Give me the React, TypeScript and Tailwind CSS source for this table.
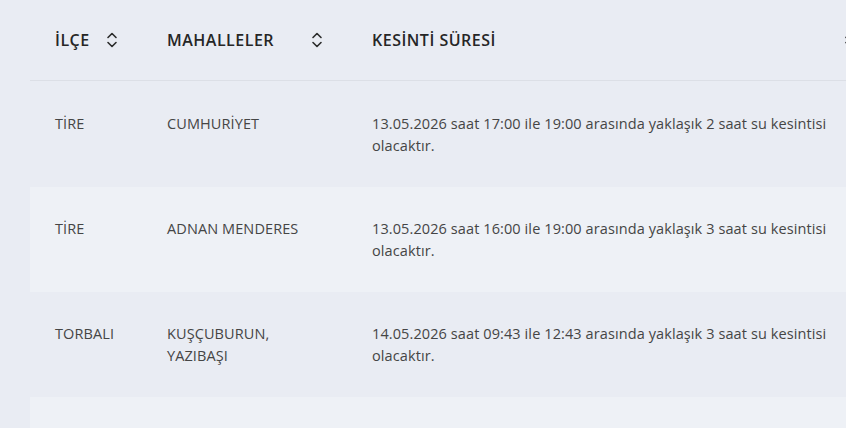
import React from 'react';

type Row = { ilce: string; mahalle: string; sure: string };

const rows: Row[] = [
    { ilce: 'TİRE', mahalle: 'CUMHURİYET', sure: '13.05.2026 saat 17:00 ile 19:00 arasında yaklaşık 2 saat su kesintisi olacaktır.' },
    { ilce: 'TİRE', mahalle: 'ADNAN MENDERES', sure: '13.05.2026 saat 16:00 ile 19:00 arasında yaklaşık 3 saat su kesintisi olacaktır.' },
    { ilce: 'TORBALI', mahalle: 'KUŞÇUBURUN, YAZIBAŞI', sure: '14.05.2026 saat 09:43 ile 12:43 arasında yaklaşık 3 saat su kesintisi olacaktır.' },
    { ilce: '', mahalle: '', sure: '' },
];

const SortIcon = () => (
    <svg width="12" height="18" viewBox="0 0 12 18" fill="none" stroke="#2b2b2b" strokeWidth="1.6" strokeLinecap="round" strokeLinejoin="round">
        <path d="M2 6.5 L6 2.5 L10 6.5" />
        <path d="M2 11.5 L6 15.5 L10 11.5" />
    </svg>
);

const cols = 'grid grid-cols-[112px_205px_530px]';

export default function App() {
    return (
        <div className="w-[846px] h-[428px] overflow-hidden bg-[#e9ecf3] font-['Open_Sans',sans-serif]">
            <div className="ml-[30px] w-[900px]">
                {/* HEADER */}
                <div className={`${cols} h-[81px] items-center border-b border-[#dcdfe6] text-[16px] font-semibold tracking-[0.5px] text-[#262626]`}>
                    <div className="pl-[25px] pr-[24px] flex items-center justify-between">
                        <span>İLÇE</span>
                        <SortIcon />
                    </div>
                    <div className="pl-[25px] pr-[24px] flex items-center justify-between">
                        <span>MAHALLELER</span>
                        <SortIcon />
                    </div>
                    <div className="pl-[25px] pr-[21px] flex items-center justify-between">
                        <span>KESİNTİ SÜRESİ</span>
                        <SortIcon />
                    </div>
                </div>

                {/* ROWS */}
                {rows.map((r, i) => (
                    <div
                        key={i}
                        className={`${cols} ${i === 0 ? 'pt-[32px]' : 'pt-[31px]'} pb-[30px] min-h-[105px] text-[14.5px] tracking-[0.1px] leading-[22px] text-[#454545] ${i % 2 === 1 ? 'bg-[#eef1f6]' : ''}`}
                    >
                        <div className="pl-[25px] pr-[10px]">{r.ilce}</div>
                        <div className="pl-[25px] pr-[30px]">{r.mahalle}</div>
                        <div className="pl-[25px] pr-[24px]">{r.sure}</div>
                    </div>
                ))}
            </div>
        </div>
    );
}
